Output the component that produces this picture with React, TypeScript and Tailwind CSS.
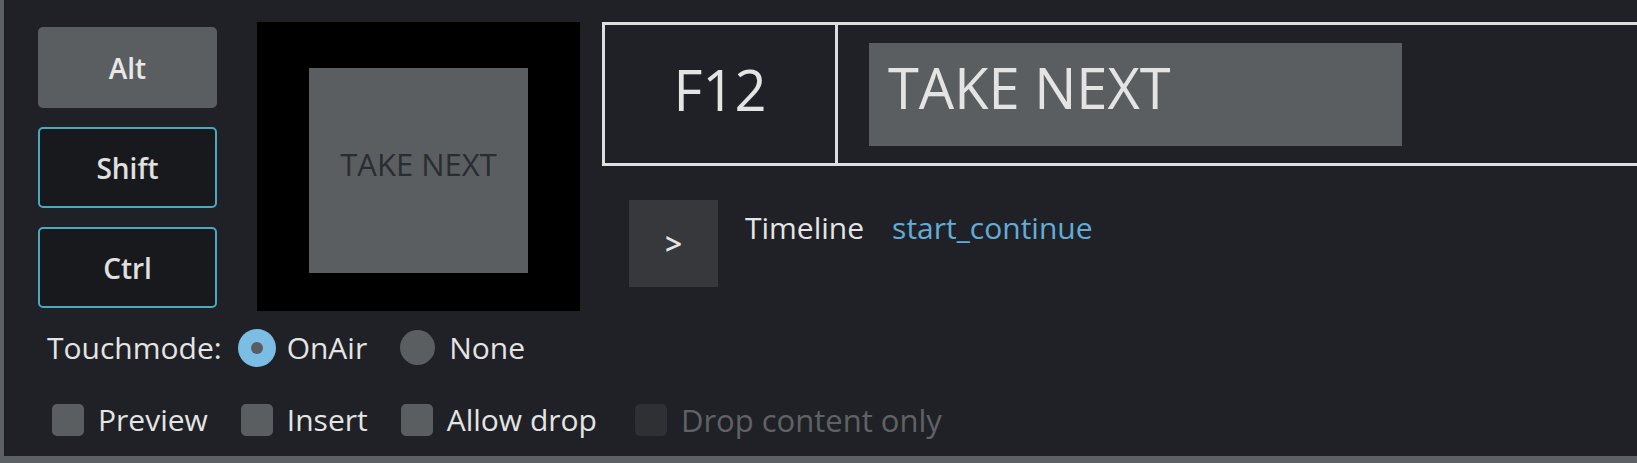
import React from "react";

const modifierKeys = [
  { label: "Alt", active: true },
  { label: "Shift", active: false },
  { label: "Ctrl", active: false },
];

const dropOptions = [
  { label: "Preview", disabled: false },
  { label: "Insert", disabled: false },
  { label: "Allow drop", disabled: false },
  { label: "Drop content only", disabled: true },
];

function ModifierKey({ label, active }: { label: string; active: boolean }) {
  return (
    <div
      className={
        active
          ? "h-[81px] rounded-[5px] bg-[#5b5e61] flex items-center justify-center text-[28px] font-semibold leading-none text-[#e8e8e8]"
          : "h-[81px] rounded-[5px] bg-[#17191c] border-2 border-[#4aa9bf] flex items-center justify-center text-[28px] font-semibold leading-none text-[#e0e0e0]"
      }
    >
      {label}
    </div>
  );
}

function Radio({ label, checked }: { label: string; checked: boolean }) {
  return (
    <div className="flex items-center">
      {checked ? (
        <div className="w-[38px] h-[38px] rounded-full bg-[#7cbde6] flex items-center justify-center">
          <div className="w-[12px] h-[12px] rounded-full bg-[#595c60]" />
        </div>
      ) : (
        <div className="w-[35px] h-[35px] rounded-full bg-[#5b5e61]" />
      )}
      <span className={checked ? "ml-[11px]" : "ml-[14px]"}>{label}</span>
    </div>
  );
}

export default function App() {
  return (
    <div className="w-[1637px] h-[463px] overflow-hidden bg-[#1f2126] border-l-4 border-b-[7px] border-[#5e6164] font-['Open_Sans',sans-serif] text-[#e4e4e4] flex flex-col">
      {/* Tasten, Vorschau und Makro */}
      <div className="flex items-start pt-[22px]">
        <div className="ml-[34px] w-[179px] pt-[5px] flex flex-col gap-[19px]">
          {modifierKeys.map((k) => (
            <ModifierKey key={k.label} label={k.label} active={k.active} />
          ))}
        </div>

        <div className="ml-[40px] w-[323px] h-[289px] bg-black pl-[52px] pt-[46px]">
          <div className="w-[219px] h-[205px] bg-[#5b5e61] flex items-center justify-center pb-3 text-[31px] leading-none text-[#2a2c30]">
            TAKE NEXT
          </div>
        </div>

        <div className="ml-[22px] flex-1 flex flex-col">
          <div className="h-[144px] flex border-y-[3px] border-l-[3px] border-[#dedede]">
            <div className="w-[233px] border-r-[3px] border-[#dedede] flex items-center justify-center pb-[11px] text-[56px] leading-none">
              F12
            </div>
            <div className="flex items-center pl-[31px]">
              <div className="w-[533px] h-[103px] bg-[#5b5e61] flex items-center pl-[19px] pb-[15px] text-[56px] leading-none">
                TAKE NEXT
              </div>
            </div>
          </div>

          <div className="flex items-start mt-[34px] ml-[27px]">
            <div className="w-[89px] h-[87px] bg-[#36383c] flex items-center justify-center text-[30px] font-semibold leading-none">
              &gt;
            </div>
            <div className="ml-[27px] mt-[13px] flex gap-[28px] text-[30px] leading-none">
              <span>Timeline</span>
              <span className="text-[#63acd8]">start_continue</span>
            </div>
          </div>
        </div>
      </div>

      {/* Touchmode */}
      <div className="h-[70px] flex items-center pl-[43px] pt-[3px] text-[30px] leading-none">
        <span>Touchmode:</span>
        <div className="ml-[16px] flex items-center gap-[33px]">
          <Radio label="OnAir" checked />
          <Radio label="None" checked={false} />
        </div>
      </div>

      {/* Optionen */}
      <div className="flex-1 flex items-center pt-[3px] pl-[48px] gap-[33px] text-[30px] leading-none">
        {dropOptions.map((o) => (
          <div
            key={o.label}
            className={
              o.disabled
                ? "ml-[5px] flex items-center gap-[14px] text-[31px]"
                : "flex items-center gap-[14px]"
            }
          >
            <div
              className={
                o.disabled
                  ? "w-[32px] h-[32px] rounded-[5px] bg-[#2e3034]"
                  : "w-[32px] h-[32px] rounded-[5px] bg-[#5b5e61]"
              }
            />
            <span className={o.disabled ? "text-[#5f6265]" : ""}>{o.label}</span>
          </div>
        ))}
      </div>
    </div>
  );
}
